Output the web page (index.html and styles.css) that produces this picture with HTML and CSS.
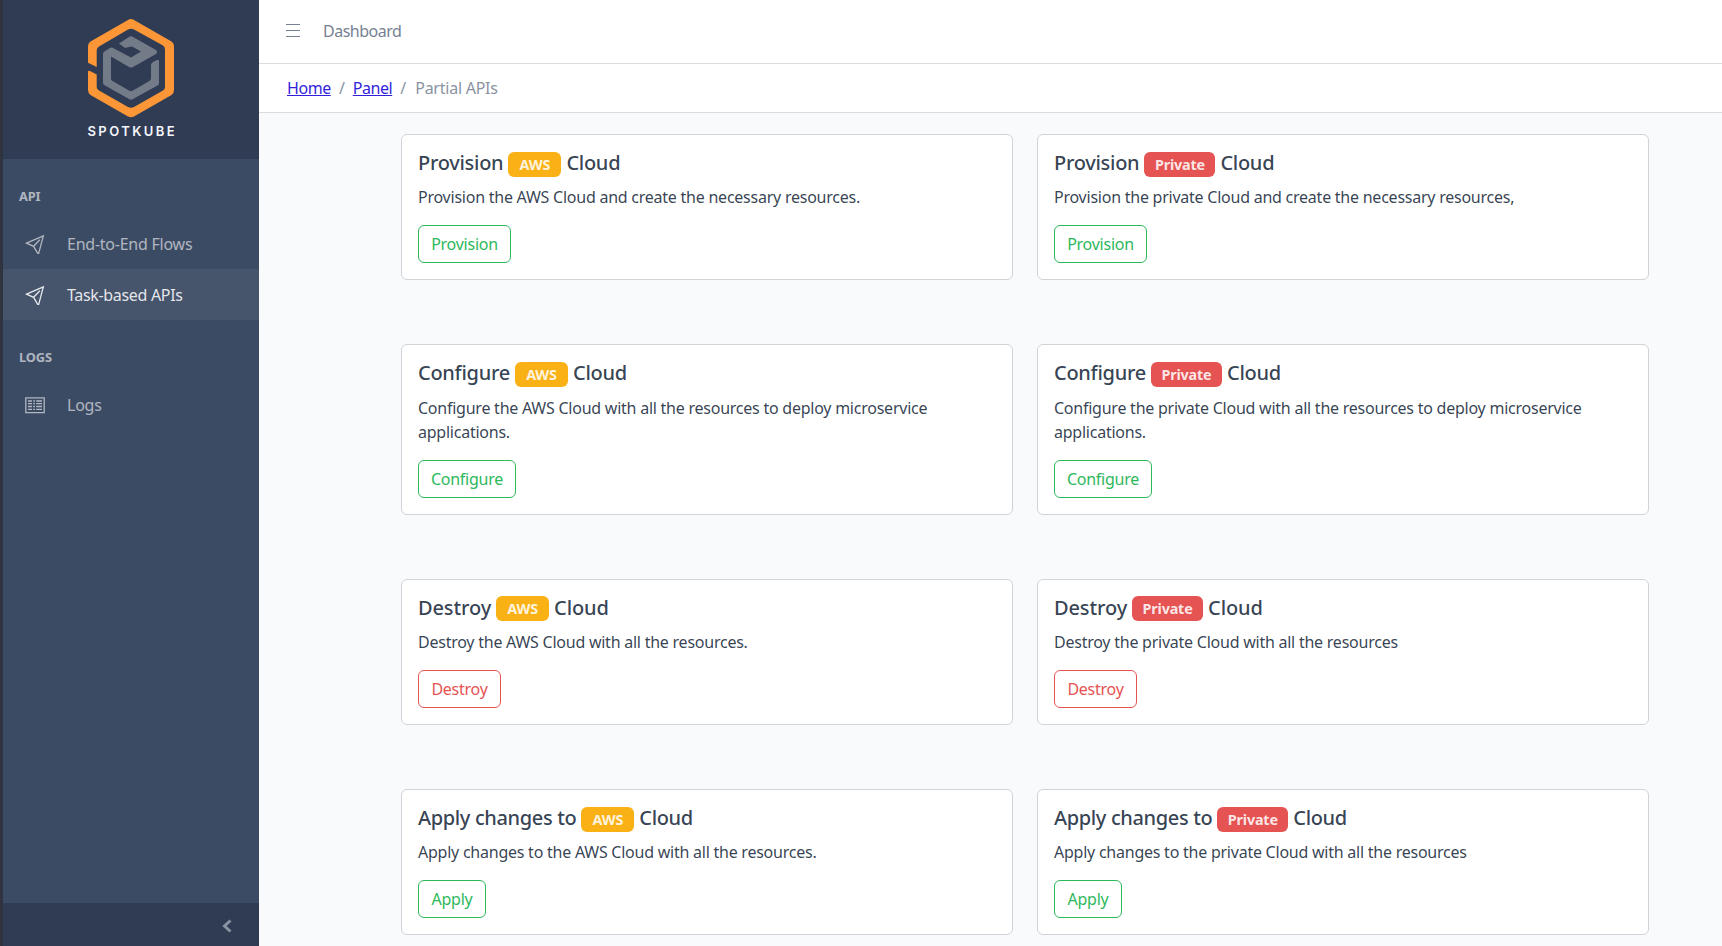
FILE: index.html
```html
<!DOCTYPE html>
<html lang="en">
<head>
<meta charset="utf-8">
<title>Spotkube</title>
<link rel="stylesheet" href="styles.css">
</head>
<body>
<div class="app">
  <aside class="sidebar">
    <div class="brand">
      <svg class="logo" viewBox="0 0 90 122" width="90" height="122">
        <path class="logo-outer" fill-rule="evenodd" d="M1 43.700V27Q1 24 3.500 22.500L41 1Q44 -1 47 1L84.500 22.500Q87 24 87 27V71Q87 74 84.500 76L47 97.500Q44 99 41 97.500L3.500 76Q1 74 1 71V53Q1 51 3 52L9.700 55.500V68Q9.700 70 12 71.500L41 88Q44 89.500 47 88L76 71.500Q78 70 78 68V30.500Q78 28 76 26.500L47 10.500Q44 9 41 10.500L12 27.500Q9.700 29 9.700 31V48Z"/>
        <path class="logo-inner" d="M32 24.500L42 18Q44 16.500 46 18L69 31Q71 33 69 35L46 48Q44 49 42 48L24 37.500V59.500Q24 61 25.500 62L42 71.500Q44 72.500 46 71.500L62.500 62Q64 61 64 59V46Q64 44.500 66 43L70 41Q72 40.500 72 42V64Q72 65.500 70.500 66.500L46 80Q44 81.500 42 80L18 66.500Q16 65 16 64V35Q16 33.500 18 32L23 29Q24.500 28 26 29L44 38.500L54 32.500L46 28Q44 27 42 28L38 29Z"/>
        <text class="logo-text" x="0.500" y="117" textLength="89">SPOTKUBE</text>
      </svg>
    </div>
    <nav class="nav">
      <div class="nav-title">API</div>
      <a class="nav-item">
        <svg class="icon" viewBox="0 0 20 20"><path d="M1.500 9.200 18.300 1.900 13.700 19.300H12.700L8.600 12.300ZM8.600 12.300 14.800 5.800"/></svg>
        <span>End-to-End Flows</span>
      </a>
      <a class="nav-item active">
        <svg class="icon" viewBox="0 0 20 20"><path d="M1.500 9.200 18.300 1.900 13.700 19.300H12.700L8.600 12.300ZM8.600 12.300 14.800 5.800"/></svg>
        <span>Task-based APIs</span>
      </a>
      <div class="nav-title">LOGS</div>
      <a class="nav-item">
        <svg class="icon" viewBox="0 0 20 20"><path d="M.8 2.800H19.200V17.600H.8ZM3 6H7M8.200 6H10M11.200 6H17M3 8.700H7M8.200 8.700H10M11.200 8.700H17M3 11.500H7M8.200 11.500H10M11.200 11.500H17M3 14.300H7M8.200 14.300H10M11.200 14.300H17"/></svg>
        <span>Logs</span>
      </a>
    </nav>
    <div class="sidebar-footer">
      <svg class="chevron" viewBox="0 0 10 14" width="10" height="14"><path d="M8.500 1.500 2.500 7 8.500 12.500"/></svg>
    </div>
  </aside>
  <div class="main">
    <header class="topbar">
      <svg class="menu" viewBox="0 0 14 14" width="14" height="14"><path d="M0 1.500H14M0 7.500H14M0 13.500H14"/></svg>
      <span>Dashboard</span>
    </header>
    <div class="crumbs">
      <a class="link" href="#">Home</a><span class="sep">/</span><a class="link" href="#">Panel</a><span class="sep">/</span><span class="current">Partial APIs</span>
    </div>
    <main class="cards">
      <section class="card">
        <h5 class="title">Provision <span class="badge aws">AWS</span> Cloud</h5>
        <p class="text">Provision the AWS Cloud and create the necessary resources.</p>
        <button class="btn provision">Provision</button>
      </section>
      <section class="card">
        <h5 class="title">Provision <span class="badge private">Private</span> Cloud</h5>
        <p class="text">Provision the private Cloud and create the necessary resources,</p>
        <button class="btn provision">Provision</button>
      </section>
      <section class="card">
        <h5 class="title">Configure <span class="badge aws">AWS</span> Cloud</h5>
        <p class="text">Configure the AWS Cloud with all the resources to deploy microservice<br>applications.</p>
        <button class="btn configure">Configure</button>
      </section>
      <section class="card">
        <h5 class="title">Configure <span class="badge private">Private</span> Cloud</h5>
        <p class="text">Configure the private Cloud with all the resources to deploy microservice<br>applications.</p>
        <button class="btn configure">Configure</button>
      </section>
      <section class="card">
        <h5 class="title title-destroy">Destroy <span class="badge aws">AWS</span> Cloud</h5>
        <p class="text">Destroy the AWS Cloud with all the resources.</p>
        <button class="btn destroy">Destroy</button>
      </section>
      <section class="card">
        <h5 class="title title-destroy">Destroy <span class="badge private">Private</span> Cloud</h5>
        <p class="text">Destroy the private Cloud with all the resources</p>
        <button class="btn destroy">Destroy</button>
      </section>
      <section class="card">
        <h5 class="title title-apply">Apply changes to <span class="badge aws">AWS</span> Cloud</h5>
        <p class="text">Apply changes to the AWS Cloud with all the resources.</p>
        <button class="btn apply">Apply</button>
      </section>
      <section class="card">
        <h5 class="title title-apply">Apply changes to <span class="badge private">Private</span> Cloud</h5>
        <p class="text">Apply changes to the private Cloud with all the resources</p>
        <button class="btn apply">Apply</button>
      </section>
    </main>
  </div>
</div>
</body>
</html>
```
FILE: styles.css
```css
* { box-sizing: border-box; }
body {
  margin: 0;
  font: 16px/24px "Noto Sans", sans-serif;
  letter-spacing: -0.24px;
  color: rgba(44, 56, 74, 0.95);
  background: #f9fafc;
}
.app { display: flex; height: 946px; overflow: hidden; }
.sidebar {
  width: 259px;
  flex: none;
  display: flex;
  flex-direction: column;
  background: #3c4b64;
  border-left: 3px solid #303340;
}
.brand {
  height: 159px;
  flex: none;
  display: flex;
  padding: 19px 0 0 84px;
  background: #303c54;
}
.logo-outer { fill: #fc9637; }
.logo-inner { fill: #737b88; }
.logo-text { font: 600 13px Inter, sans-serif; fill: #f3f5f9; letter-spacing: 2px; }
.nav { flex: 1; }
.nav-title {
  height: 59px;
  padding: 25px 16px 0;
  font-size: 12.8px;
  line-height: 24px;
  font-weight: 700;
  letter-spacing: -0.1px;
  color: rgba(255, 255, 255, 0.6);
}
.nav-item {
  display: flex;
  align-items: center;
  height: 51px;
  padding-left: 22px;
  gap: 22px;
  color: rgba(255, 255, 255, 0.6);
}
.nav-item.active { color: rgba(255, 255, 255, 0.87); background: #46546c; letter-spacing: -0.32px; }
.icon { width: 20px; height: 20px; fill: none; stroke: currentColor; stroke-width: 1.3; }
.sidebar-footer {
  height: 43px;
  display: flex;
  align-items: center;
  justify-content: flex-end;
  padding: 3px 27px 0 0;
  background: #303c54;
}
.chevron { fill: none; stroke: #8a93a2; stroke-width: 3; }
.main { flex: 1; }
.topbar {
  height: 64px;
  display: flex;
  align-items: center;
  gap: 23px;
  padding: 0 0 2px 27px;
  background: #fff;
  border-bottom: 1px solid #d8dbe0;
  color: #768192;
  letter-spacing: -0.5px;
}
.menu { fill: none; stroke: #768192; stroke-width: 1.2; margin-bottom: 2px; overflow: visible; }
.crumbs {
  height: 49px;
  display: flex;
  align-items: center;
  padding-left: 28px;
  background: #fff;
  border-bottom: 1px solid #d8dbe0;
  color: #8a93a2;
}
.link { color: #321fdb; text-decoration: underline; letter-spacing: -0.45px; }
.sep { width: 22px; text-align: center; }
.current { margin-left: 1px; }
.cards {
  display: grid;
  grid-template-columns: 612px 612px;
  column-gap: 24px;
  row-gap: 64px;
  padding: 21px 0 0 142px;
}
.card {
  padding: 16px;
  background: #fff;
  border: 1px solid #d0d3d7;
  border-radius: 6px;
}
.title {
  display: flex;
  align-items: center;
  gap: 5px;
  height: 26.3px;
  margin: 0 0 8px;
  padding-bottom: 3px;
  font-size: 20px;
  font-weight: 500;
  line-height: 24px;
  letter-spacing: -0.28px;
}
.title-destroy { letter-spacing: -0.12px; padding-bottom: 2px; }
.title-apply { letter-spacing: -0.36px; }
.badge {
  height: 25px;
  line-height: 25px;
  border-radius: 6px;
  color: rgba(255, 255, 255, 0.87);
  font-size: 14.4px;
  font-weight: 700;
  text-align: center;
  letter-spacing: -0.2px;
  position: relative;
  top: 2px;
}
.title-destroy .badge { top: 1px; }
.aws { width: 53px; background: #f9b115; }
.private { width: 71px; background: #e55353; }
.text { margin: 0 0 16px; }
.btn {
  display: block;
  height: 38px;
  padding: 0;
  font: inherit;
  letter-spacing: -0.25px;
  text-align: center;
  color: #2eb85c;
  background: none;
  border: 1px solid #2eb85c;
  border-radius: 6px;
}
.provision { width: 93px; }
.configure { width: 98px; }
.destroy { width: 83px; color: #e55353; border-color: #e55353; }
.apply { width: 68px; }
```
